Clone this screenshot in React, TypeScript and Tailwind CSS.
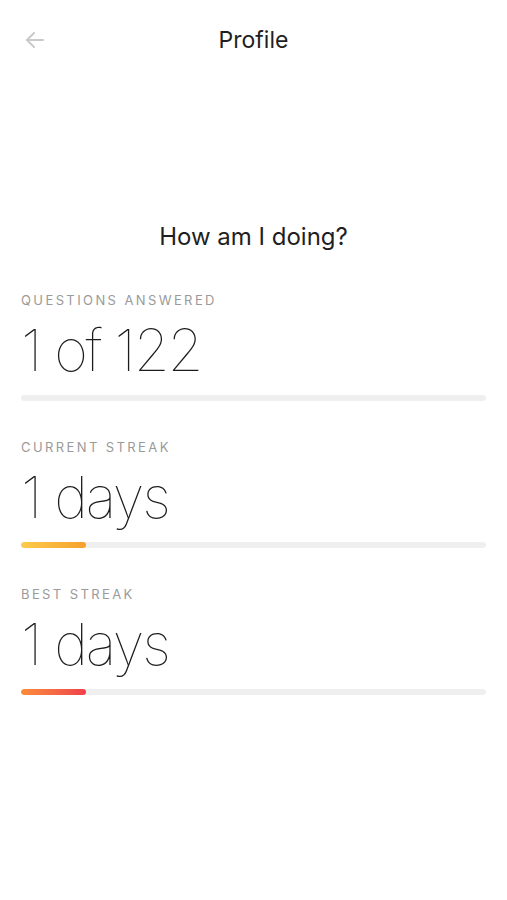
import React from 'react';

type Stat = {
  label: string;
  value: string;
  progress: number;
  fill: string;
};

const stats: Stat[] = [
  { label: 'Questions answered', value: '1 of 122', progress: 0, fill: '' },
  { label: 'Current streak', value: '1 days', progress: 14, fill: 'bg-gradient-to-r from-[#fccb4c] to-[#f6a02c]' },
  { label: 'Best streak', value: '1 days', progress: 14, fill: 'bg-gradient-to-r from-[#fb8c3a] to-[#ef3f4a]' },
];

const BackArrow = () => (
  <svg width="24" height="24" viewBox="0 0 24 24" fill="none" stroke="#cacaca" strokeWidth="2" strokeLinecap="round" strokeLinejoin="round">
    <path d="M20 12H4" />
    <path d="M11 5l-7 7 7 7" />
  </svg>
);

const StatRow = ({ stat }: { stat: Stat }) => (
  <div className="flex flex-col">
    <div className="text-[13px] uppercase tracking-[2.4px] text-[#9a9a9a] leading-none">{stat.label}</div>
    <div className="mt-[14px] text-[58px] font-thin text-[#1c1c1c] leading-none tracking-[-2.2px]">{stat.value}</div>
    <div className="mt-[16px] h-[6px] w-full rounded-full bg-[#efefef] overflow-hidden">
      {stat.progress > 0 && (
        <div className={`h-full rounded-full ${stat.fill}`} style={{ width: `${stat.progress}%` }} />
      )}
    </div>
  </div>
);

const App: React.FC = () => {
  return (
    <div className="min-h-screen w-full bg-white font-['Inter',sans-serif]">
      {/* Header */}
      <div className="relative flex h-[80px] items-center justify-center">
        <button className="absolute left-[23px] top-[28px]">
          <BackArrow />
        </button>
        <h1 className="text-[23px] text-[#1f1f1f] font-normal">Profile</h1>
      </div>

      <div className="px-[21px] pt-[145px]">
        <h2 className="text-center text-[24px] text-[#1f1f1f] leading-none">How am I doing?</h2>
        <div className="mt-[45px] flex flex-col gap-[40px]">
          {stats.map((s) => (
            <StatRow key={s.label} stat={s} />
          ))}
        </div>
      </div>
    </div>
  );
};

export default App;
